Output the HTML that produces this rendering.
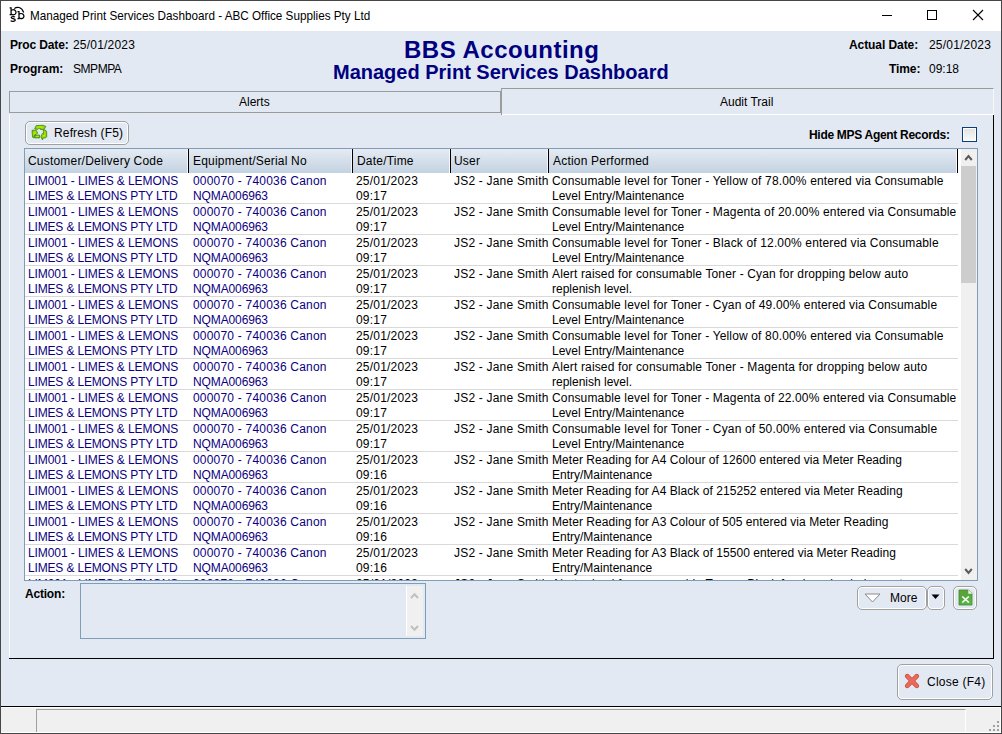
<!DOCTYPE html>
<html><head><meta charset="utf-8">
<style>
*{box-sizing:border-box;margin:0;padding:0}
html,body{width:1002px;height:734px;overflow:hidden;background:#fff}
body{position:relative;font-family:"Liberation Sans",sans-serif;font-size:12px;color:#000}
.a{position:absolute}
.t{position:absolute;white-space:pre;line-height:14px}
.b{font-weight:bold}
.btn{position:absolute;border:1px solid #a0a0a0;border-radius:5px;box-shadow:inset 0 0 0 1px #fff;background:#e3e9f2}
#tbl{position:absolute;left:24px;top:148px;width:954px;height:433px;border:1px solid #7f9db9;background:#fff;overflow:hidden}
#hdr{position:absolute;left:0;top:0;width:933px;height:24px;background:linear-gradient(#e5ebf3,#c3d2e1)}
.hd{position:absolute;top:0;height:24px;width:1px;background:#000}
.hdl{position:absolute;top:0;height:24px;width:1px;background:#f4f7fb}
.ht{position:absolute;top:5px;white-space:pre;line-height:14px;letter-spacing:0.2px}
#body{position:absolute;left:0;top:24px;width:933px;height:407px;overflow:hidden}
.row{position:absolute;left:0;width:933px;height:31px;overflow:hidden}
.c{position:absolute;top:1px;white-space:pre;line-height:15px}
.c1{left:3px;color:#0c0080;letter-spacing:-0.08px}
.c2{left:168px;color:#0c0080;letter-spacing:0.2px}
.c3{left:331px;letter-spacing:0.2px}
.c4{left:429px;letter-spacing:0.2px}
.c5{left:527px}
.sep{position:absolute;left:0;top:30px;width:933px;height:1px;background:#d9d9d9}
#sb{position:absolute;left:936px;top:0;width:16px;height:431px;background:#f0f0f0}
</style></head><body>
<!-- window frame -->
<div class="a" style="left:0;top:0;width:1002px;height:734px;background:#474747"></div>
<div class="a" style="left:1px;top:1px;width:1000px;height:30px;background:#fff"></div>
<div class="a" style="left:1px;top:31px;width:1000px;height:676px;background:#e3e9f2"></div>
<div class="a" style="left:1px;top:706px;width:1000px;height:1px;background:#000"></div>
<div class="a" style="left:1px;top:707px;width:1000px;height:26px;background:#fff"></div>
<div class="a" style="left:1px;top:708px;width:999px;height:24px;background:#f0f0f0"></div>
<!-- status panel -->
<div class="a" style="left:36px;top:709px;width:930px;height:23px;border-left:1px solid #a0a0a0;border-top:1px solid #a0a0a0;border-right:1px solid #fff"></div>
<svg class="a" style="left:985px;top:718px" width="16" height="14">
<rect x="12" y="3" width="2" height="2" fill="#a0a0a0"/>
<rect x="8" y="7" width="2" height="2" fill="#a0a0a0"/><rect x="12" y="7" width="2" height="2" fill="#a0a0a0"/>
<rect x="4" y="11" width="2" height="2" fill="#a0a0a0"/><rect x="8" y="11" width="2" height="2" fill="#a0a0a0"/><rect x="12" y="11" width="2" height="2" fill="#a0a0a0"/>
</svg>

<!-- title -->
<svg class="a" style="left:0;top:0" width="30" height="30">
<g fill="none" stroke="#000" stroke-width="1.25">
<path d="M9.6 7.9H11.1V14.5H9.6"/><path d="M11.1 10.6C12 9.6 14 9.4 15.2 10.4C16.4 11.6 16.2 13.6 15 14.3C13.9 14.9 12 14.8 11.1 13.8"/>
<path d="M17.5 11.7H19V18.5H17.5"/><path d="M19 14.4C19.9 13.4 21.9 13.2 23.1 14.2C24.3 15.4 24.1 17.4 22.9 18.1C21.8 18.7 19.9 18.6 19 17.6"/>
<path d="M15 17C14.2 16.4 11.4 16.3 11.2 17.6C11 19 15.3 18.4 15.3 20.1C15.3 21.5 12 21.6 10.6 20.7"/>
<path d="M14.3 8.6C16.8 6.4 21.6 6.6 23.7 12.5"/>
</g></svg>
<div class="t" style="left:30px;top:9px;font-size:12.6px;color:#000;transform:scaleX(0.93);transform-origin:0 0">Managed Print Services Dashboard - ABC Office Supplies Pty Ltd</div>
<div class="a" style="left:882px;top:15px;width:10px;height:1px;background:#000"></div>
<div class="a" style="left:927px;top:10px;width:10px;height:10px;border:1px solid #000"></div>
<svg class="a" style="left:972px;top:9px" width="12" height="12"><path d="M1 1L11 11M11 1L1 11" stroke="#000" stroke-width="1.1"/></svg>

<!-- header -->
<div class="t b" style="left:10px;top:38px;letter-spacing:-0.15px">Proc Date:</div>
<div class="t" style="left:73px;top:38px;letter-spacing:0.2px">25/01/2023</div>
<div class="t b" style="left:10px;top:62px">Program:</div>
<div class="t" style="left:73px;top:62px;letter-spacing:-0.45px">SMPMPA</div>
<div class="t b" style="left:404px;top:36px;font-size:24px;line-height:28px;color:#000080;letter-spacing:0.5px">BBS Accounting</div>
<div class="t b" style="left:333px;top:61px;font-size:20px;line-height:22px;color:#000080">Managed Print Services Dashboard</div>
<div class="t b" style="left:849px;top:38px;letter-spacing:-0.08px">Actual Date:</div>
<div class="t" style="left:929px;top:38px;letter-spacing:0.2px">25/01/2023</div>
<div class="t b" style="left:889px;top:62px;letter-spacing:-0.1px">Time:</div>
<div class="t" style="left:929px;top:62px">09:18</div>

<!-- tabs -->
<div class="a" style="left:9px;top:91px;width:492px;height:22px;border:1px solid #9b9b9b"></div>
<div class="t" style="left:239px;top:95px">Alerts</div>
<div class="a" style="left:501px;top:88px;width:493px;height:27px;border-left:1px solid #9b9b9b;border-top:1px solid #9b9b9b;border-right:1px solid #f8f8f8"></div>
<div class="t" style="left:720px;top:95px">Audit Trail</div>
<!-- tab body -->
<div class="a" style="left:9px;top:114px;width:1px;height:545px;background:#fff"></div>
<div class="a" style="left:502px;top:114px;width:491px;height:1px;background:#fff"></div>
<div class="a" style="left:993px;top:115px;width:1px;height:544px;background:#000"></div>
<div class="a" style="left:9px;top:658px;width:985px;height:1px;background:#000"></div>

<!-- refresh -->
<div class="btn" style="left:25px;top:121px;width:104px;height:24px"></div>
<svg class="a" style="left:30px;top:124px" width="18" height="18" viewBox="0 0 18 18">
<defs><radialGradient id="rg" cx="0.5" cy="0.45" r="0.6"><stop offset="0" stop-color="#c0f200"/><stop offset="0.6" stop-color="#96d800"/><stop offset="1" stop-color="#5aa810"/></radialGradient></defs>
<g fill="url(#rg)" stroke="#3f8a12" stroke-width="0.8" stroke-linejoin="round">
<path d="M4.6 4.7L6.2 1.6L12.9 1.3L15.8 2.4L14.1 5.5L10.4 5.5L10.6 4.4L8.8 4.3L7.4 5.6Z"/>
<path d="M2.1 6.2L6.1 6.2L7.7 9.2L6.1 10.2L4.6 10.8L4 14L2.6 13.2L2.1 8.2Z"/>
<path d="M5 11.1H9.7V13.9H4.6Z"/>
<path d="M13.2 6.2H15.6L16.7 7.8V12.7L15.6 13.9H13.1L12.5 16L11 12.8L12.3 9.4L13.7 10.4L13.3 7.4Z"/>
</g></svg>
<div class="t" style="left:54px;top:126px;letter-spacing:0.15px">Refresh (F5)</div>

<!-- hide mps -->
<div class="t b" style="left:809px;top:128px;letter-spacing:-0.3px">Hide MPS Agent Records:</div>
<div class="a" style="left:962px;top:127px;width:15px;height:15px;border:1px solid #0a3d7a;box-shadow:inset 0 0 0 1px #fff;background:linear-gradient(#e2e2e2,#fafafa)"></div>

<!-- table -->
<div id="tbl">
<div id="hdr">
<div class="ht" style="left:3px">Customer/Delivery Code</div>
<div class="hdl" style="left:162px"></div><div class="hd" style="left:163px"></div>
<div class="ht" style="left:168px">Equipment/Serial No</div>
<div class="hdl" style="left:326px"></div><div class="hd" style="left:327px"></div>
<div class="ht" style="left:332px">Date/Time</div>
<div class="hdl" style="left:424px"></div><div class="hd" style="left:425px"></div>
<div class="ht" style="left:429px">User</div>
<div class="hdl" style="left:522px"></div><div class="hd" style="left:523px"></div>
<div class="ht" style="left:528px">Action Performed</div>
<div class="hdl" style="left:931px"></div><div class="hd" style="left:932px"></div>
</div>
<div id="body">
<div class="row" style="top:0px">
<div class="c c1">LIM001 - LIMES &amp; LEMONS<br><span style="letter-spacing:-0.16px">LIMES &amp; LEMONS PTY LTD</span></div>
<div class="c c2">000070 - 740036 Canon<br><span style="letter-spacing:-0.12px">NQMA006963</span></div>
<div class="c c3">25/01/2023<br>09:17</div>
<div class="c c4">JS2 - Jane Smith</div>
<div class="c c5"><span style="letter-spacing:0.15px">Consumable level for Toner - Yellow of 78.00% entered via Consumable</span><br><span style="letter-spacing:0px">Level Entry/Maintenance</span></div>
<div class="sep"></div></div>
<div class="row" style="top:31px">
<div class="c c1">LIM001 - LIMES &amp; LEMONS<br><span style="letter-spacing:-0.16px">LIMES &amp; LEMONS PTY LTD</span></div>
<div class="c c2">000070 - 740036 Canon<br><span style="letter-spacing:-0.12px">NQMA006963</span></div>
<div class="c c3">25/01/2023<br>09:17</div>
<div class="c c4">JS2 - Jane Smith</div>
<div class="c c5"><span style="letter-spacing:0.15px">Consumable level for Toner - Magenta of 20.00% entered via Consumable</span><br><span style="letter-spacing:0px">Level Entry/Maintenance</span></div>
<div class="sep"></div></div>
<div class="row" style="top:62px">
<div class="c c1">LIM001 - LIMES &amp; LEMONS<br><span style="letter-spacing:-0.16px">LIMES &amp; LEMONS PTY LTD</span></div>
<div class="c c2">000070 - 740036 Canon<br><span style="letter-spacing:-0.12px">NQMA006963</span></div>
<div class="c c3">25/01/2023<br>09:17</div>
<div class="c c4">JS2 - Jane Smith</div>
<div class="c c5"><span style="letter-spacing:0.15px">Consumable level for Toner - Black of 12.00% entered via Consumable</span><br><span style="letter-spacing:0px">Level Entry/Maintenance</span></div>
<div class="sep"></div></div>
<div class="row" style="top:93px">
<div class="c c1">LIM001 - LIMES &amp; LEMONS<br><span style="letter-spacing:-0.16px">LIMES &amp; LEMONS PTY LTD</span></div>
<div class="c c2">000070 - 740036 Canon<br><span style="letter-spacing:-0.12px">NQMA006963</span></div>
<div class="c c3">25/01/2023<br>09:17</div>
<div class="c c4">JS2 - Jane Smith</div>
<div class="c c5"><span style="letter-spacing:0.15px">Alert raised for consumable Toner - Cyan for dropping below auto</span><br><span style="letter-spacing:0px">replenish level.</span></div>
<div class="sep"></div></div>
<div class="row" style="top:124px">
<div class="c c1">LIM001 - LIMES &amp; LEMONS<br><span style="letter-spacing:-0.16px">LIMES &amp; LEMONS PTY LTD</span></div>
<div class="c c2">000070 - 740036 Canon<br><span style="letter-spacing:-0.12px">NQMA006963</span></div>
<div class="c c3">25/01/2023<br>09:17</div>
<div class="c c4">JS2 - Jane Smith</div>
<div class="c c5"><span style="letter-spacing:0.15px">Consumable level for Toner - Cyan of 49.00% entered via Consumable</span><br><span style="letter-spacing:0px">Level Entry/Maintenance</span></div>
<div class="sep"></div></div>
<div class="row" style="top:155px">
<div class="c c1">LIM001 - LIMES &amp; LEMONS<br><span style="letter-spacing:-0.16px">LIMES &amp; LEMONS PTY LTD</span></div>
<div class="c c2">000070 - 740036 Canon<br><span style="letter-spacing:-0.12px">NQMA006963</span></div>
<div class="c c3">25/01/2023<br>09:17</div>
<div class="c c4">JS2 - Jane Smith</div>
<div class="c c5"><span style="letter-spacing:0.15px">Consumable level for Toner - Yellow of 80.00% entered via Consumable</span><br><span style="letter-spacing:0px">Level Entry/Maintenance</span></div>
<div class="sep"></div></div>
<div class="row" style="top:186px">
<div class="c c1">LIM001 - LIMES &amp; LEMONS<br><span style="letter-spacing:-0.16px">LIMES &amp; LEMONS PTY LTD</span></div>
<div class="c c2">000070 - 740036 Canon<br><span style="letter-spacing:-0.12px">NQMA006963</span></div>
<div class="c c3">25/01/2023<br>09:17</div>
<div class="c c4">JS2 - Jane Smith</div>
<div class="c c5"><span style="letter-spacing:0.15px">Alert raised for consumable Toner - Magenta for dropping below auto</span><br><span style="letter-spacing:0px">replenish level.</span></div>
<div class="sep"></div></div>
<div class="row" style="top:217px">
<div class="c c1">LIM001 - LIMES &amp; LEMONS<br><span style="letter-spacing:-0.16px">LIMES &amp; LEMONS PTY LTD</span></div>
<div class="c c2">000070 - 740036 Canon<br><span style="letter-spacing:-0.12px">NQMA006963</span></div>
<div class="c c3">25/01/2023<br>09:17</div>
<div class="c c4">JS2 - Jane Smith</div>
<div class="c c5"><span style="letter-spacing:0.15px">Consumable level for Toner - Magenta of 22.00% entered via Consumable</span><br><span style="letter-spacing:0px">Level Entry/Maintenance</span></div>
<div class="sep"></div></div>
<div class="row" style="top:248px">
<div class="c c1">LIM001 - LIMES &amp; LEMONS<br><span style="letter-spacing:-0.16px">LIMES &amp; LEMONS PTY LTD</span></div>
<div class="c c2">000070 - 740036 Canon<br><span style="letter-spacing:-0.12px">NQMA006963</span></div>
<div class="c c3">25/01/2023<br>09:17</div>
<div class="c c4">JS2 - Jane Smith</div>
<div class="c c5"><span style="letter-spacing:0.15px">Consumable level for Toner - Cyan of 50.00% entered via Consumable</span><br><span style="letter-spacing:0px">Level Entry/Maintenance</span></div>
<div class="sep"></div></div>
<div class="row" style="top:279px">
<div class="c c1">LIM001 - LIMES &amp; LEMONS<br><span style="letter-spacing:-0.16px">LIMES &amp; LEMONS PTY LTD</span></div>
<div class="c c2">000070 - 740036 Canon<br><span style="letter-spacing:-0.12px">NQMA006963</span></div>
<div class="c c3">25/01/2023<br>09:16</div>
<div class="c c4">JS2 - Jane Smith</div>
<div class="c c5"><span style="letter-spacing:0.05px">Meter Reading for A4 Colour of 12600 entered via Meter Reading</span><br><span style="letter-spacing:0px">Entry/Maintenance</span></div>
<div class="sep"></div></div>
<div class="row" style="top:310px">
<div class="c c1">LIM001 - LIMES &amp; LEMONS<br><span style="letter-spacing:-0.16px">LIMES &amp; LEMONS PTY LTD</span></div>
<div class="c c2">000070 - 740036 Canon<br><span style="letter-spacing:-0.12px">NQMA006963</span></div>
<div class="c c3">25/01/2023<br>09:16</div>
<div class="c c4">JS2 - Jane Smith</div>
<div class="c c5"><span style="letter-spacing:0.05px">Meter Reading for A4 Black of 215252 entered via Meter Reading</span><br><span style="letter-spacing:0px">Entry/Maintenance</span></div>
<div class="sep"></div></div>
<div class="row" style="top:341px">
<div class="c c1">LIM001 - LIMES &amp; LEMONS<br><span style="letter-spacing:-0.16px">LIMES &amp; LEMONS PTY LTD</span></div>
<div class="c c2">000070 - 740036 Canon<br><span style="letter-spacing:-0.12px">NQMA006963</span></div>
<div class="c c3">25/01/2023<br>09:16</div>
<div class="c c4">JS2 - Jane Smith</div>
<div class="c c5"><span style="letter-spacing:0.05px">Meter Reading for A3 Colour of 505 entered via Meter Reading</span><br><span style="letter-spacing:0px">Entry/Maintenance</span></div>
<div class="sep"></div></div>
<div class="row" style="top:372px">
<div class="c c1">LIM001 - LIMES &amp; LEMONS<br><span style="letter-spacing:-0.16px">LIMES &amp; LEMONS PTY LTD</span></div>
<div class="c c2">000070 - 740036 Canon<br><span style="letter-spacing:-0.12px">NQMA006963</span></div>
<div class="c c3">25/01/2023<br>09:16</div>
<div class="c c4">JS2 - Jane Smith</div>
<div class="c c5"><span style="letter-spacing:0.05px">Meter Reading for A3 Black of 15500 entered via Meter Reading</span><br><span style="letter-spacing:0px">Entry/Maintenance</span></div>
<div class="sep"></div></div>
<div class="row" style="top:403px">
<div class="c c1">LIM001 - LIMES &amp; LEMONS<br><span style="letter-spacing:-0.16px">LIMES &amp; LEMONS PTY LTD</span></div>
<div class="c c2">000070 - 740036 Canon<br><span style="letter-spacing:-0.12px">NQMA006963</span></div>
<div class="c c3">25/01/2023<br>09:16</div>
<div class="c c4">JS2 - Jane Smith</div>
<div class="c c5"><span style="letter-spacing:0.15px">Alert raised for consumable Toner - Black for dropping below auto</span><br><span style="letter-spacing:0px">replenish level.</span></div>
<div class="sep"></div></div>
</div>
<div id="sb">
<div class="a" style="left:0;top:17px;width:15px;height:117px;background:#cdcdcd"></div>
<svg class="a" style="left:3px;top:4px" width="10" height="10"><path d="M1.2 7L4.5 3L7.8 7" fill="none" stroke="#5a5a5a" stroke-width="2"/></svg>
<svg class="a" style="left:3px;top:417px" width="10" height="10"><path d="M1.2 3L4.5 7L7.8 3" fill="none" stroke="#5a5a5a" stroke-width="2"/></svg>
</div>
</div>

<!-- action -->
<div class="t b" style="left:25px;top:587px;letter-spacing:-0.2px">Action:</div>
<div class="a" style="left:80px;top:583px;width:346px;height:56px;border:1px solid #7f9db9"></div>
<div class="a" style="left:406px;top:586px;width:17px;height:50px;background:#f0f0f0;border-left:1px solid #fff"></div>
<svg class="a" style="left:409px;top:591px" width="11" height="9"><path d="M2 7L5.5 3.2L9 7" fill="none" stroke="#c0c0c0" stroke-width="2"/></svg>
<svg class="a" style="left:409px;top:624px" width="11" height="9"><path d="M2 2L5.5 5.8L9 2" fill="none" stroke="#c0c0c0" stroke-width="2"/></svg>

<!-- more -->
<div class="btn" style="left:857px;top:586px;width:70px;height:24px"></div>
<svg class="a" style="left:864px;top:593px" width="18" height="10"><path d="M1 1H16L8.5 9Z" fill="#fff" stroke="#8a8a8a" stroke-width="1"/></svg>
<div class="t" style="left:890px;top:591px">More</div>
<div class="btn" style="left:927px;top:586px;width:18px;height:24px"></div>
<svg class="a" style="left:931px;top:594px" width="10" height="6"><path d="M0.5 0.5H8.5L4.5 5Z" fill="#000"/></svg>
<div class="btn" style="left:953px;top:586px;width:24px;height:24px"></div>
<svg class="a" style="left:958px;top:589px" width="16" height="18">
<defs><linearGradient id="xg" x1="0" y1="0" x2="0.6" y2="1"><stop offset="0" stop-color="#6a9a3a"/><stop offset="0.5" stop-color="#52a83a"/><stop offset="1" stop-color="#5cb845"/></linearGradient></defs>
<path d="M1 1H10.5L14 4.5V16H1Z" fill="url(#xg)" stroke="#3f8a2a" stroke-width="0.8"/>
<path d="M10.3 0.8V4.7H14.2Z" fill="#f4f4f4"/>
<path d="M4.3 7.5L10.8 13.5M10.8 7.5L4.3 13.5" stroke="#fff" stroke-width="1.7"/>
</svg>

<!-- close -->
<div class="btn" style="left:897px;top:664px;width:96px;height:36px"></div>
<svg class="a" style="left:903px;top:672px" width="18" height="18">
<path d="M4.2 4.2L13.8 13.8M13.8 4.2L4.2 13.8" stroke="#c94a3c" stroke-width="4.6" stroke-linecap="round"/>
<path d="M4.2 4.2L13.8 13.8M13.8 4.2L4.2 13.8" stroke="#ec6a5a" stroke-width="3.2" stroke-linecap="round"/>
</svg>
<div class="t" style="left:927px;top:675px;letter-spacing:0.25px">Close (F4)</div>

</body></html>
